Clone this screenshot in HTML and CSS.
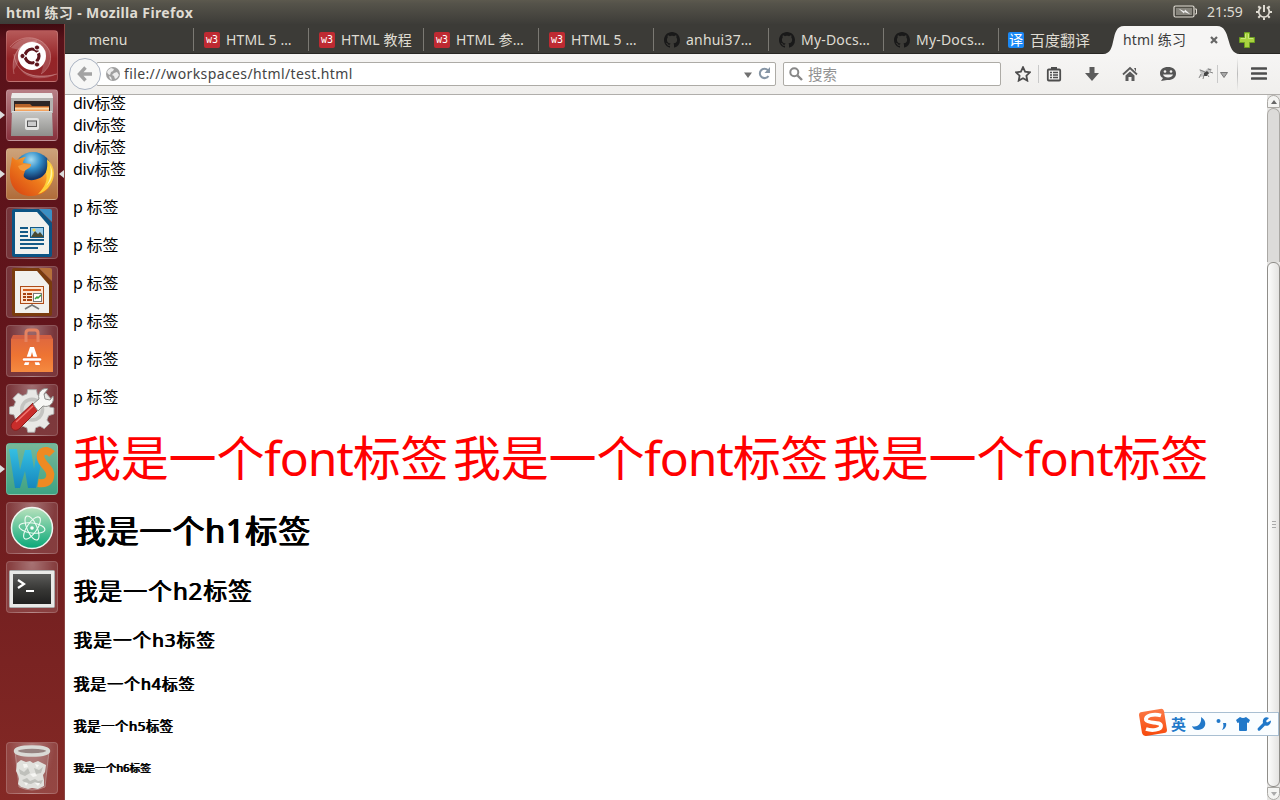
FILE: index.html
```html
<!DOCTYPE html>
<html lang="zh-CN">
<head>
<meta charset="utf-8">
<title>html 练习</title>
<link rel="stylesheet" href="styles.css">
</head>
<body>
<header class="panel">
  <span class="panel-title">html 练习 - Mozilla Firefox</span>
  <svg class="battery" width="25" height="14" viewBox="0 0 25 14"><rect x="1" y="1" width="20" height="11" rx="1.5" fill="none" stroke="#dfdbd2" stroke-width="1.2"/><path d="M22 4h1.500v5H22" fill="none" stroke="#dfdbd2"/><rect x="3" y="3" width="16" height="7" fill="#86847c"/><path d="M5.500 3.500l6 3 .5-2 5.500 5-6-2.500-.5 1.500z" fill="#eee"/></svg>
  <span class="clock">21:59</span>
  <svg width="18" height="18" viewBox="0 0 18 18" fill="none" stroke="#dfdbd2"><path d="M6.2 4.3a5.3 5.3 0 1 0 5.6 0" stroke-width="1.800"/><path d="M9 2v7" stroke-width="2"/><path d="M1 9h2M15 9h2M9 15v2M3.3 3.3l1.7 1.7M14.700 3.300L13 5M3.300 14.700L5 13M14.700 14.700L13 13" stroke-width="2"/></svg>
</header>
<div class="desktop">
<nav class="launcher">
  <div class="tile dash"><svg viewBox="0 0 52 52"><path d="M5 18C16 3 38 5 44 22c2 9-1 16-9 22 3-9 3-15 1-21L14 20z" fill="#fff" opacity=".18"/><path d="M8 24c1 17 17 26 43 20-15 8-39 7-43-20z" fill="#fff" opacity=".22"/><path d="M8 40C5 22 15 11 31 11c-12 3-17 8-18 17-1 7-4 10-5 12z" fill="#fff" opacity=".2"/><g fill="none" stroke="#e5b7b3" stroke-opacity=".4"><path d="M4 17C15 3 37 5 44 22c2 9-1 17-9 22"/><path d="M8 44C4 24 15 11 31 11"/><path d="M8 24c1 17 17 27 43 20"/></g><circle cx="26" cy="26" r="14" fill="#fff"/><circle cx="26" cy="26" r="7" fill="none" stroke="#5d151c" stroke-width="3.200"/><g stroke="#fff" stroke-width="1.500"><path d="M26 26l9-5.200M26 26l-10.400 0M26 26l5.200 9"/></g><g fill="#5d151c" stroke="#fff" stroke-width="1"><circle cx="16.500" cy="26" r="2.600"/><circle cx="31" cy="17.500" r="2.600"/><circle cx="31" cy="34.500" r="2.600"/></g></svg></div>
  <div class="tile files running"><svg viewBox="0 0 52 52"><defs><linearGradient id="gf" x2="0" y2="1"><stop stop-color="#c9c9c7"/><stop offset="1" stop-color="#8f8f8c"/></linearGradient></defs><path d="M6 4h40l1 6v14H5V10z" fill="#b4b3b0"/><path d="M6 4h40l1 5H5z" fill="#ececea"/><rect x="8" y="12" width="36" height="12" fill="#2d2625"/><path d="M9 15h15l2 2h17v6H9z" fill="#b5642b"/><path d="M9 18h34v4H9z" fill="#f2a25e"/><path d="M9 19h34v1.500H9z" fill="#f8d9a8"/><path d="M6 22h40l1 25H5z" fill="url(#gf)"/><path d="M6 22.500h40" stroke="#ddd"/><rect x="19" y="29" width="14" height="12" rx="2" fill="#e4e4e2"/><rect x="21.500" y="32" width="9" height="5.500" fill="#ccc" stroke="#555"/></svg></div>
  <div class="tile firefox running focused"><svg viewBox="0 0 52 52"><defs><radialGradient id="gb" cx=".45" cy=".2"><stop stop-color="#a6dcf0"/><stop offset=".5" stop-color="#328ec9"/><stop offset="1" stop-color="#133668"/></radialGradient><linearGradient id="go" x1="0" x2="1" y1="1" y2="0"><stop stop-color="#d43d10"/><stop offset=".5" stop-color="#ee7b1c"/><stop offset="1" stop-color="#ffe65a"/></linearGradient></defs><circle cx="27" cy="23" r="19" fill="url(#gb)"/><path d="M6 9c2 1 3 3 5 3 3-2 6-3 9-3-2 2-3 4-3 6l8 1c0 3-5 4-6 6 0 3-2 4-1 7 5 5 11 3 16 1 7-4 9-10 7-19 7 6 9 15 5 23-4 9-11 14-21 14C11 48 3 38 4 24c0-5 1-6 2-15z" fill="url(#go)"/><path d="M41 12c7 7 9 17 3 25-3 5-8 8-12 9 7-7 10-14 8-21 1-5 2-8 1-13z" fill="#ffcf38"/><path d="M44 17c2 8 0 16-4 21 7-6 8-14 4-21z" fill="#fff3a0"/><path d="M12 18l6-2 7 1c0 3-5 4-6 6-4 0-6-2-7-5z" fill="#f59a3b"/></svg></div>
  <div class="tile writer"><svg viewBox="0 0 52 52"><path d="M6 4q0-2 2-2h25l13 14v32q0 2-2 2H8q-2 0-2-2z" fill="#0c5484"/><path d="M9 5h22l12 14v28H9z" fill="#f1f1ee"/><path d="M33 2h11q2 0 2 2v11z" fill="#3a8fc4"/><path d="M14 21h8M14 25h8M14 29h8M14 33h24M14 37h24M14 41h18" stroke="#145a87" stroke-width="2"/><rect x="24.500" y="20.500" width="13" height="10" fill="#9bcce8" stroke="#145a87"/><path d="M25 30l4-6 3 3 2-2 4 5z" fill="#494a32"/><circle cx="28" cy="23" r="1.500" fill="#f6d645"/></svg></div>
  <div class="tile impress"><svg viewBox="0 0 52 52"><path d="M6 4q0-2 2-2h25l13 14v32q0 2-2 2H8q-2 0-2-2z" fill="#7a3c0e"/><path d="M9 5h22l12 14v28H9z" fill="#f1f1ee"/><path d="M33 2h11q2 0 2 2v11z" fill="#b5703a"/><path d="M26 38v2M19 43l7-4 7 4" stroke="#777" stroke-width="1.600" fill="none"/><rect x="14.500" y="20.500" width="23" height="17" fill="#fde6d3" stroke="#ae4c19"/><path d="M17 24h18" stroke="#d35f20" stroke-width="2"/><path d="M17 28h3M17 31h3M17 34h3M21 28h5M21 31h5M21 34h5" stroke="#a64312" stroke-width="2"/><rect x="27.500" y="27.500" width="8" height="8" fill="#fff" stroke="#777"/><path d="M29 33l2-2 1 1 3-3" fill="none" stroke="#34a23a" stroke-width="1.500"/></svg></div>
  <div class="tile store"><svg viewBox="0 0 52 52"><defs><linearGradient id="gs" x2="0" y2="1"><stop stop-color="#e0693e"/><stop offset=".5" stop-color="#ee7433"/><stop offset="1" stop-color="#f58a40"/></linearGradient></defs><path d="M5 14l2-4h38l2 4z" fill="#d25f42"/><path d="M5 14h42v33H5z" fill="url(#gs)"/><path d="M20 17V8q0-3 3-3h6q3 0 3 3v9" fill="none" stroke="#e58361" stroke-width="3"/><path d="M18 40l6-18h4l6 18h-4.500l-3.500-13-3.500 13z" fill="#fff"/><path d="M17 34.500h18" stroke="#eb6b31" stroke-width="5.500"/><path d="M18 34.500h16" stroke="#fff" stroke-width="2.500" stroke-linecap="round"/></svg></div>
  <div class="tile settings"><svg viewBox="0 0 52 52"><g transform="translate(3.500 3) scale(.87)"><path d="M21 3h10l1 6 5 2 5-4 6 7-4 4 2 5 5 1v7l-6 2-2 5 3 4-6 6-5-3-5 2-1 5h-8l-1-5-5-2-5 3-6-6 3-5-2-5-5-1v-8l5-1 2-5-3-4 6-6 5 3 5-2z" fill="#e8e8e5" stroke="#aaa"/><circle cx="26" cy="26" r="14" fill="#c4c4c1"/><circle cx="26" cy="26" r="10" fill="#dededb"/></g><path d="M7 38l20-19 6 6-20 20c-5 4-11-2-6-7z" fill="#c92d2b" stroke="#8d1b1b"/><path d="M10 38l17-16" stroke="#f07670" stroke-width="1.500"/><path d="M27 20l6-5c-2-7 4-12 9-10l-4 5 1 5 5 1 3-4c2 7-4 12-10 10l-5 5z" fill="#f7f7f5" stroke="#8f8f8c"/></svg></div>
  <div class="tile webstorm running"><svg viewBox="0 0 52 52"><defs><linearGradient id="gw" x2="0" y2="1"><stop stop-color="#35bfe2"/><stop offset="1" stop-color="#1687bd"/></linearGradient></defs><path d="M3 6h8l3 21 5-20h6l3 19 3-19h7l-8 38h-8l-3-17-5 17H9z" fill="url(#gw)"/><path d="M46 11C39 4 31 10 36 18c3 6 10 9 8 16-1 6-6 7-12 6" fill="none" stroke="#ee8a22" stroke-width="8"/></svg></div>
  <div class="tile atom"><svg viewBox="0 0 52 52"><defs><linearGradient id="ga" x2="0" y2="1"><stop stop-color="#b9e2bd"/><stop offset="1" stop-color="#08a878"/></linearGradient></defs><circle cx="26" cy="26" r="20.500" fill="url(#ga)" stroke="#f1f5f0" stroke-width="1.500"/><g fill="none" stroke="#eefbf3" stroke-width="1.100"><ellipse cx="26" cy="26" rx="13" ry="5" transform="rotate(8 26 26)"/><ellipse cx="26" cy="26" rx="13" ry="5" transform="rotate(66 26 26)"/><ellipse cx="26" cy="26" rx="13" ry="5" transform="rotate(124 26 26)"/></g><circle cx="26" cy="26" r="1.800" fill="#fff"/></svg></div>
  <div class="tile terminal"><svg viewBox="0 0 52 52"><defs><linearGradient id="gt" x2="0" y2="1"><stop stop-color="#5c5c5a"/><stop offset=".5" stop-color="#383836"/><stop offset="1" stop-color="#20201f"/></linearGradient></defs><rect x="3.500" y="9.500" width="45" height="37" rx="1" fill="#e9e9e7" stroke="#aaa"/><rect x="7" y="13" width="38" height="30" fill="url(#gt)"/><path d="M12 19l6 4-6 4" stroke="#fff" stroke-width="2.200" fill="none"/><path d="M20 30h8" stroke="#fff" stroke-width="2"/></svg></div>
  <div class="tile trash"><svg viewBox="0 0 52 52"><path d="M9 9l4 36q13 6 26 0l4-36z" fill="#ccc" fill-opacity=".2" stroke="#d0bcba" stroke-opacity=".5"/><path d="M11 21l4-3 5 2 4-1 3 2 5-2 4 2 4 2-1 7-2 3 1 5 0 6-6 3-6-1-4 1-7-2-3-3 1-5-1-4-2-4z" fill="#e0e0dc"/><g fill="#bfc0bb"><path d="M13 27l5 3 4-4 2 5-5 3-5-2zM28 26l5 2 4-3-2 6-5 1zM16 38l5-2 3 3 5-2 3 2 5-1-2 4-6-2-4 2-6-1z"/></g><g fill="#f6f6f3"><path d="M17 22l4 0 1 3-4 1zM29 22l4 1-2 3zM24 32l5-1 2 3-4 1zM18 40l4 1-2 3zM29 41l5 0-2 3z"/></g><ellipse cx="26" cy="9" rx="16.500" ry="4" fill="#968381" stroke="#dadad6" stroke-width="3.500"/></svg></div>
</nav>
<main class="window">
  <div class="tabs">
    <div class="tab first"><span>menu</span></div>
    <div class="tab"><i class="w3">w3</i><span>HTML 5 …</span></div>
    <div class="tab"><i class="w3">w3</i><span>HTML 教程</span></div>
    <div class="tab"><i class="w3">w3</i><span>HTML 参…</span></div>
    <div class="tab"><i class="w3">w3</i><span>HTML 5 …</span></div>
    <div class="tab git"><svg width="16" height="16" viewBox="0 0 16 16"><use href="#cat"/></svg><span>anhui37…</span></div>
    <div class="tab git"><svg width="16" height="16" viewBox="0 0 16 16"><path id="cat" fill="#191919" d="M8 0C3.580 0 0 3.580 0 8c0 3.540 2.290 6.530 5.470 7.590.4.070.55-.17.55-.38 0-.19-.01-.82-.01-1.490-2.010.37-2.530-.49-2.690-.94-.09-.23-.48-.94-.82-1.130-.28-.15-.68-.52-.01-.53.63-.01 1.080.58 1.230.82.72 1.210 1.870.87 2.330.66.070-.52.28-.87.51-1.070-1.780-.2-3.640-.89-3.640-3.950 0-.87.31-1.590.82-2.150-.08-.2-.36-1.020.08-2.120 0 0 .67-.21 2.200.82.64-.18 1.320-.27 2-.27s1.360.09 2 .27c1.530-1.040 2.200-.82 2.200-.82.44 1.100.16 1.920.08 2.120.51.56.82 1.270.82 2.150 0 3.070-1.870 3.750-3.650 3.950.29.25.54.73.54 1.480 0 1.070-.01 1.930-.01 2.200 0 .21.15.46.55.38A8 8 0 0 0 16 8c0-4.420-3.580-8-8-8z"/></svg><span>My-Docs…</span></div>
    <div class="tab git"><svg width="16" height="16" viewBox="0 0 16 16"><use href="#cat"/></svg><span>My-Docs…</span></div>
    <div class="tab baidu"><i class="yi">译</i><span>百度翻译</span></div>
    <div class="tab-active">
      <svg class="tab-shape" width="142" height="29" viewBox="0 0 142 29"><path d="M3 29C18 29 9 1 24 1h93c15 0 8 28 23 28z" fill="#f6f5f4"/></svg>
      <span>html 练习</span>
      <svg class="close" width="8" height="8" viewBox="0 0 8 8"><path d="M1 1l6 6M7 1L1 7" stroke="#666" stroke-width="2.200"/></svg>
    </div>
    <svg class="plus" width="16" height="16" viewBox="0 0 16 16"><path d="M5.500.5h5v5h5v5h-5v5h-5v-5h-5v-5h5z" fill="#a9d240" stroke="#6d9f20"/><path d="M6.500 2v4.500H2M9.500 2v4.500H14" stroke="#cbe97c" fill="none"/></svg>
  </div>
  <div class="toolbar">
    <div class="back"><svg width="16" height="16" viewBox="0 0 16 16"><path d="M8.500 1.500L2.500 8l6 6.500M3 8H15" stroke="#a3a3a3" stroke-width="3.400" fill="none"/></svg></div>
    <div class="urlbar">
      <svg width="14" height="14" viewBox="0 0 14 14"><circle cx="7" cy="7" r="7" fill="#a0a0a0"/><path d="M2 3l3-2 3 1-1 2-2 1-1 3-2-1-1-2zM8 6l3-1 2 3-2 3-2 1-1-3-2-1zM3 9l2 1 1 3-2-1z" fill="#ededed"/></svg>
      <span class="url">file:///workspaces/html/test.html</span>
      <svg class="drop" width="8" height="6" viewBox="0 0 8 6"><path d="M0 .5h8L4 6z" fill="#707070"/></svg>
      <svg class="reload" width="13" height="13" viewBox="0 0 13 13"><path d="M10.500 9A4.700 4.700 0 1 1 10 3.200" fill="none" stroke="#8796a6" stroke-width="2"/><path d="M12 0v6H6.500z" fill="#8796a6"/></svg>
    </div>
    <div class="search"><svg width="14" height="14" viewBox="0 0 14 14"><circle cx="5.300" cy="5.300" r="4" fill="none" stroke="#888" stroke-width="2"/><path d="M8.500 8.500l4.500 4.500" stroke="#888" stroke-width="2.400"/></svg><span>搜索</span></div>
    <div class="tools">
      <svg width="16" height="16" viewBox="0 0 16 16"><path d="M8 1.200l2.100 4.500 4.800.6-3.500 3.400.9 4.900L8 12.200l-4.300 2.400.9-4.900L1.100 6.300l4.800-.6z" fill="none" stroke="#4d4d4d" stroke-width="1.800"/></svg>
      <i class="sep s1"></i>
      <svg class="m7" width="16" height="16" viewBox="0 0 16 16"><rect x="1.800" y="3.500" width="12.400" height="11" rx="1" fill="none" stroke="#4d4d4d" stroke-width="1.800"/><path d="M5 1h6v3H5z" fill="#4d4d4d"/><path d="M4 6.500h2M7 6.500h5M4 9h2M7 9h5M4 11.500h2M7 11.500h5" stroke="#4d4d4d" stroke-width="1.400"/></svg>
      <svg width="16" height="16" viewBox="0 0 16 16"><path d="M5.500 1h5v6H15l-7 8-7-8h4.500z" fill="#5b5b5b"/></svg>
      <svg width="16" height="16" viewBox="0 0 16 16"><path d="M1 8.500L8 2l7 6.500" fill="none" stroke="#5b5b5b" stroke-width="1.800"/><path d="M3.500 9.500L8 5.500l4.500 4V15h-3v-4h-3v4h-3zM12 2h2v4z" fill="#5b5b5b"/></svg>
      <svg width="16" height="16" viewBox="0 0 16 16"><path d="M8 1c5 0 8 2.500 8 6.500S13 14 8 14H7l-6 1 2-3C1 11 0 9.500 0 7.500 0 3.500 3 1 8 1z" fill="#555"/><circle cx="5" cy="5.500" r="1.300" fill="#f2f1f0"/><circle cx="11" cy="5.500" r="1.300" fill="#f2f1f0"/><path d="M3 8.500h10c-1 4-9 4-10 0z" fill="#f2f1f0"/></svg>
      <svg width="16" height="16" viewBox="0 0 16 16"><path d="M1 3l6 2 3-3 4 1-2 4-5 3-5 1 1-3z" fill="#c4c4c4"/><path d="M6 7l3-2 2 2-2 3-3 0z" fill="#444"/><path d="M3 8l-2 4M6 9l-1 4M9 8l2 3M2 4l5 2M12 6l3 1M10 3l3 1" fill="none" stroke="#777" stroke-width=".9"/></svg>
      <i class="sep s2"></i>
      <svg class="m3" width="8" height="6" viewBox="0 0 8 6"><path d="M.5.5h7L4 5.500z" fill="#aaa" stroke="#777"/></svg>
      <i class="sep s3"></i>
      <svg class="burger" width="16" height="13" viewBox="0 0 16 13"><path d="M1 1.500h14M1 6.500h14M1 11.500h14" stroke="#4d4d4d" stroke-width="2.600" stroke-linecap="round"/></svg>
    </div>
  </div>
  <div class="viewport">
    <article class="page">
      <div class="lead">div标签</div><div>div标签</div><div>div标签</div><div>div标签</div>
      <p>p 标签</p><p>p 标签</p><p>p 标签</p><p>p 标签</p><p>p 标签</p><p>p 标签</p>
      <div class="big"><span>我是一个<b>font</b>标签</span><span>我是一个<b>font</b>标签</span><span>我是一个<b>font</b>标签</span></div>
      <h1>我是一个h1标签</h1>
      <h2>我是一个h2标签</h2>
      <h3>我是一个h3标签</h3>
      <h4>我是一个h4标签</h4>
      <h5>我是一个h5标签</h5>
      <h6>我是一个h6标签</h6>
    </article>
    <aside class="scrollbar">
      <div class="step up"><svg width="6" height="4" viewBox="0 0 6 4"><path d="M0 4h6L3 0z" fill="#666"/></svg></div>
      <div class="trough"></div>
      <div class="thumb"><i></i><i></i><i></i></div>
      <div class="step down"><svg width="6" height="4" viewBox="0 0 6 4"><path d="M0 0h6L3 4z" fill="#aaa"/></svg></div>
    </aside>
  </div>
</main>
</div>
<div class="ime">
  <svg class="sogou" width="30" height="29" viewBox="0 0 30 29"><defs><linearGradient id="gi" x2="0" y2="1"><stop stop-color="#fb7a48"/><stop offset="1" stop-color="#f74a0c"/></linearGradient></defs><path d="M4 4L22 1q3-1 4 2l3 19q0 3-3 3L8 28q-3 0-4-3L1 7q0-3 3-3z" fill="url(#gi)"/><path d="M23 7.500C15 5 7 8 8 12c2 4 15 1 15 6 0 4-9 5-15 3" fill="none" stroke="#fff" stroke-width="3.800"/></svg>
  <span>英</span>
  <svg class="moon" width="14" height="14" viewBox="0 0 14 14"><path d="M9 0c7 4 5 13-3 13-3 0-5-1-6-4 5 2 10-2 9-9z" fill="#2178c9"/></svg>
  <svg class="punct" width="11" height="12" viewBox="0 0 11 12"><circle cx="2.500" cy="3" r="2" fill="#2178c9"/><path d="M7 5h3c1 3-1 6-4 7 1-2 2-3 1-7z" fill="#2178c9"/></svg>
  <svg class="shirt" width="14" height="14" viewBox="0 0 14 14"><path d="M4 0q3 2 6 0l4 3-1.500 3L11 5.500V13q0 1-1 1H4q-1 0-1-1V5.500L1.500 6 0 3z" fill="#2178c9"/></svg>
  <svg class="wrench" width="14" height="14" viewBox="0 0 14 14"><path d="M1 11l5-5c-1-4 2-7 6-5L9 4l1 1.500 4-2c0 4-3 6-6 5l-5 5c-2 1-3-1-2-2.500z" fill="#2178c9"/></svg>
</div>
</body>
</html>
```

FILE: styles.css
```css
* { box-sizing: border-box; }
body {
  margin: 0;
  width: 1280px;
  height: 800px;
  overflow: hidden;
  display: flex;
  flex-direction: column;
  background: #fff;
  font-family: "Noto Sans", "Noto Sans CJK SC", sans-serif;
  font-size: 14px;
}
svg { display: block; flex: none; }
i { font-style: normal; }
span { white-space: nowrap; }

/* top panel */
.panel {
  height: 24px;
  flex: none;
  display: flex;
  align-items: center;
  padding: 0 7px 0 6px;
  color: #dfdbd2;
  background: linear-gradient(#5c594e, #55534a 15%, #3d3c38);
}
.panel-title { flex: 1; font-weight: bold; font-size: 14px; letter-spacing: .37px; }
.battery { margin-right: 9px; }
.clock { width: 48px; font-size: 14px; letter-spacing: 0; margin-top: -1px; }

.desktop { display: flex; flex: 1; min-height: 0; }

/* launcher */
.launcher {
  width: 65px;
  flex: none;
  display: flex;
  flex-direction: column;
  gap: 7px;
  padding: 6px 6px 6px;
  background: linear-gradient(#400a10, #59121a 2%, #62151b 40%, #842925);
  border-right: 1px solid #8a4542;
}
.tile {
  position: relative;
  width: 52px;
  height: 52px;
  flex: none;
  border-radius: 4px;
  border: 1px solid rgba(255,255,255,.16);
  background: radial-gradient(ellipse at 50% 0, rgba(255,255,255,.38), rgba(255,255,255,.14) 65%);
}
.tile svg { width: 52px; height: 52px; margin: -1px; }
.dash { background: linear-gradient(#b65a59, #952427 55%, #91262a); }
.files { background: linear-gradient(#b78086, #87313c); }
.firefox { background: linear-gradient(#cda37b, #b06c3a); }
.webstorm { background: linear-gradient(#78b798, #3ea383); }
.trash { margin-top: auto; }
.running::before, .focused::after {
  content: "";
  position: absolute;
  top: 21px;
  left: -7px;
  border: solid transparent;
  border-width: 4px 0 4px 5px;
  border-left-color: #ddd;
}
.focused::after {
  left: 52px;
  border-width: 4px 5px 4px 0;
  border-right-color: #ddd;
}

/* tab strip */
.window { flex: 1; min-width: 0; display: flex; flex-direction: column; }
.tabs {
  height: 30px;
  flex: none;
  display: flex;
  background: #3c3b37;
  border-bottom: 1px solid #282724;
  color: #dfdbd2;
}
.tab {
  width: 115px;
  flex: none;
  display: flex;
  align-items: center;
  gap: 6px;
  padding: 3px 0 0 10px;
  background: linear-gradient(#7b7973, #7b7973) right 4px / 1px 23px no-repeat;
}
.tab span, .tab-active span { margin-top: -2px; letter-spacing: .15px; }
.tab.first { width: 129px; padding-left: 24px; }
.tab.first span { letter-spacing: 0; }
.tab.baidu { background: none; padding-left: 9px; width: 101px; }
.tab.baidu span { font-size: 15px; letter-spacing: 0; }
.tab.git span { letter-spacing: .2px; }
.w3, .yi {
  width: 16px;
  height: 16px;
  border-radius: 2px;
  background: #be2a32;
  color: #fff;
  font: 10px/15px "DejaVu Sans Mono", monospace;
  text-align: center;
}
.yi { background: #1a88f5; font: 14px/15px "Noto Sans CJK SC", sans-serif; }
.tab-active {
  position: relative;
  width: 135px;
  display: flex;
  align-items: center;
  padding: 3px 0 0 23px;
  color: #3c3c3c;
}
.tab-shape { position: absolute; left: 0; top: 1px; }
.tab-active span { position: relative; flex: 1; }
.close { position: relative; margin-right: 17px; }
.plus { margin: 8px 0 0 4px; }

/* toolbar */
.toolbar {
  height: 41px;
  flex: none;
  display: flex;
  align-items: center;
  padding: 0 0 1px 4px;
  background: linear-gradient(#f6f5f4, #f0efed);
  border-bottom: 1px solid #b0aeab;
}
.back {
  position: relative;
  width: 32px;
  height: 32px;
  flex: none;
  border: 1px solid #aab3c2;
  border-radius: 50%;
  background: #f7f7f6;
  display: grid;
  place-items: center;
}
.urlbar, .search {
  height: 24px;
  display: flex;
  align-items: center;
  border: 1px solid #adaba6;
  border-radius: 2px;
  background: #fff;
}
.urlbar { width: 680px; margin-left: -5px; padding: 0 4px 0 9px; color: #444; }
.url { flex: 1; margin-left: 4px; font-size: 14px; letter-spacing: .38px; }
.drop { margin-top: 2px; }
.reload { margin-left: 6px; }
.search { width: 218px; margin-left: 7px; padding-left: 5px; gap: 5px; color: #929292; font-size: 14.500px; }
.tools { display: flex; align-items: center; margin-left: 14px; }
.tools svg + svg { margin-left: 22px; }
.sep { width: 1px; height: 18px; background: #c9c9c9; }
.s1 { margin-left: 7px; }
.m7 { margin-left: 7px; }
.s2 { margin-left: 3px; }
.m3 { margin: 2px 0 0 2px; }
.s3 { margin-left: 9px; height: 34px; background: linear-gradient(transparent, #bbb, transparent); }
.burger { margin-left: 13px; }

/* rendered page */
.viewport { flex: 1; min-height: 0; display: flex; }
.page {
  flex: 1;
  min-width: 0;
  padding-left: 8px;
  color: #000;
  font-size: 16px;
  line-height: 22px;
  white-space: nowrap;
}
.page > div { letter-spacing: -.25px; }
.page .lead { line-height: 16px; margin-bottom: 3px; }
.page p { margin: 16px 0; letter-spacing: -.2px; }
.page .big { display: flex; font-size: 48px; line-height: 66px; height: 64px; padding-top: 1px; color: red; letter-spacing: -.2px; }
.big span { width: 380px; }
.big b { font-weight: normal; letter-spacing: -1px; }
h1, h2, h3, h4, h5, h6 { font-weight: normal; letter-spacing: 1px; text-shadow: .5px 0, 1px 0; margin: 0; }
h1 { font-size: 32px; line-height: 44px; margin-top: 21px; letter-spacing: .9px; text-shadow: .5px 0, 1px 0, 1.500px 0; }
h2 { font-size: 24px; line-height: 33px; margin-top: 21px; letter-spacing: .85px; }
h3 { font-size: 18.720px; line-height: 26px; margin-top: 20px; }
h4 { font-size: 16px; line-height: 22px; margin-top: 20px; letter-spacing: .85px; }
h5 { font-size: 13.280px; line-height: 18px; margin-top: 22px; letter-spacing: .6px; }
h6 { font-size: 10.720px; line-height: 16px; margin-top: 25px; letter-spacing: .05px; }

/* scrollbar */
.scrollbar { width: 13px; flex: none; display: flex; flex-direction: column; background: #e6e5e3; }
.step { height: 13px; flex: none; display: grid; place-items: center; border: 1px solid #aaa8a4; background: #f4f4f2; }
.up { border-radius: 7px 7px 0 0; }
.down { border-radius: 0 0 7px 7px; }
.trough { height: 154px; flex: none; border: 1px solid #aaa8a4; border-bottom: 0; border-radius: 7px 7px 0 0; background: #dcdbd9; }
.thumb {
  flex: 1;
  display: flex;
  flex-direction: column;
  align-items: center;
  justify-content: center;
  gap: 2px;
  border: 1px solid #8f8d89;
  border-radius: 6px;
  background: linear-gradient(90deg, #fcfcfb, #e4e3e1);
}
.thumb i { width: 4px; height: 1px; background: #aaa; }

/* floating input-method bar */
.ime {
  position: absolute;
  left: 1145px;
  top: 712px;
  width: 134px;
  height: 24px;
  display: flex;
  align-items: center;
  border: 1px solid #a9bfd2;
  background: #fafdff;
  color: #2178c9;
  font-size: 15px;
  font-weight: bold;
}
.ime span { margin-top: -2px; }
.sogou { margin: -3px 3px 0 -8px; }
.moon { margin-left: 6px; }
.punct { margin-left: 10px; }
.shirt { margin-left: 9px; }
.wrench { margin-left: 7px; }
```
